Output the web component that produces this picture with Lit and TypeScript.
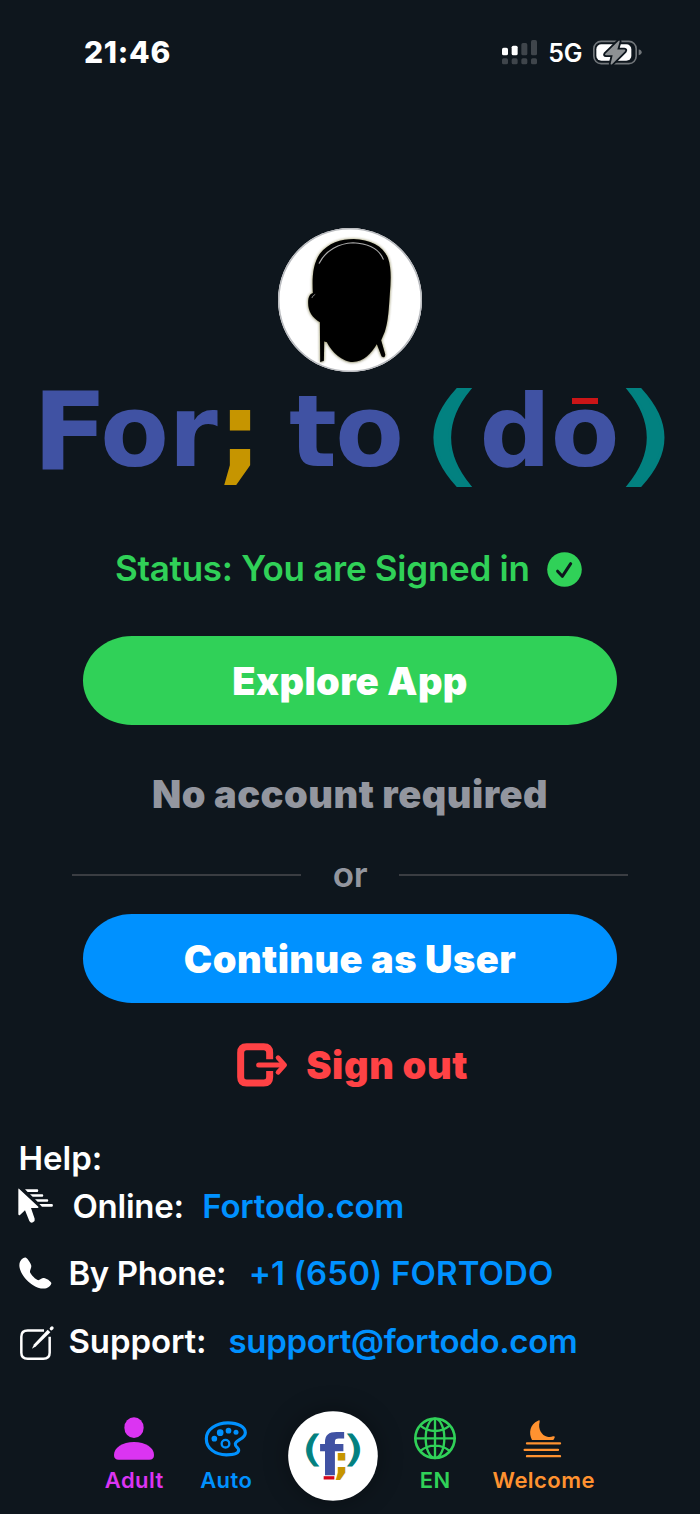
import { LitElement, html, css, type TemplateResult } from "lit";
import { customElement } from "lit/decorators.js";

interface HelpRow {
  kind: string;
  label: string;
  link: string;
  icon: TemplateResult;
}

const signalIcon = html`<svg width="35" height="25" viewBox="36 29 105 75">
  <g fill="#fff">
    <rect x="36" y="52" width="18" height="23" rx="5" />
    <rect x="65" y="46" width="18" height="29" rx="5" />
  </g>
  <g fill="#3f454b">
    <rect x="94" y="38" width="18" height="37" rx="5" />
    <rect x="123" y="29" width="18" height="46" rx="5" />
    <rect x="36" y="84" width="18" height="18" rx="5" />
    <rect x="65" y="84" width="18" height="18" rx="5" />
    <rect x="94" y="84" width="18" height="18" rx="5" />
    <rect x="123" y="84" width="18" height="18" rx="5" />
  </g>
</svg>`;

const batteryIcon = html`<svg width="49" height="25" viewBox="309 28.5 147 75">
  <rect x="311.5" y="32.5" width="127" height="67" rx="22" fill="none" stroke="#71767a" stroke-width="5" />
  <path d="M446 57C452 58 455 61 455 65.500C455 70 452 73 446 74Z" fill="#71767a" />
  <rect x="319" y="41" width="105" height="50" rx="15" fill="#fff" />
  <path
    d="M386 31L346 70Q343 74 348 74H368L362 99Q361 104 366 101L405 62Q408 57 403 57H382L389 33Q389 29 386 31Z"
    fill="#8d9194" stroke="#0e161d" stroke-width="11" stroke-linejoin="round" paint-order="stroke" />
</svg>`;

const avatarArt = html`<svg class="portrait" viewBox="57 41 428 428">
  <g class="halo">
    <path
      d="M161 235C159 190 160 150 182 118C207 86 245 74 283 74C330 76 370 93 385 130C396 160 394 200 391 235C388 280 386 320 376 350L365 376L377 418Q378 427 371 427L366 424L352 388C336 415 312 441 280 441C250 441 216 410 203 382L195 380L194 437L183 441L182 322C160 310 147 290 147 265C147 245 153 238 161 235Z" />
  </g>
  <path d="M180 146C200 106 240 87 281 85C320 87 358 101 371 134" fill="none" stroke="#aaa" stroke-width="3.500" stroke-linecap="round" />
  <path d="M158 250Q161 242 168 239" fill="none" stroke="#999" stroke-width="2.500" />
</svg>`;

const wordmark = html`<svg class="wordmark" viewBox="0 380 700 115" role="img" aria-label="For; to (dō)">
  <g fill="#4052a3" font-size="100">
    <text transform="translate(32.500 469.500) scale(1.020 1)" font-size="108">F</text>
    <text x="100.200" y="466">o</text>
    <text x="168.500" y="466">r</text>
    <text x="289" y="466">t</text>
    <text x="335.300" y="466">o</text>
    <text x="479.500" y="466">d</text>
    <text x="550.700" y="466">o</text>
  </g>
  <text transform="translate(217 470) scale(1.150 1.090)" font-size="100" fill="#c69500">;</text>
  <g fill="#028180" stroke="#028180" stroke-width="2" font-size="108">
    <text class="thin" transform="translate(421.500 472) scale(1.440 1)">(</text>
    <text class="thin" transform="translate(615.800 472) scale(1.440 1)">)</text>
  </g>
  <rect x="572" y="398" width="26" height="6" fill="#cb1517" />
</svg>`;

const checkBadge = html`<svg width="35" height="35" viewBox="0 0 35 35">
  <circle cx="17.500" cy="17.500" r="17.300" fill="#30d158" />
  <path d="M10.600 19.200L15.300 24.300L23.700 11.700" fill="none" stroke="#0e161d" stroke-width="3" stroke-linecap="round" stroke-linejoin="round" />
</svg>`;

const signOutIcon = html`<svg width="50" height="44" viewBox="50 38 150 132" fill="none" stroke="#ff4245">
  <path d="M148 87V67Q148 49 130 49H79Q61 49 61 67V140Q61 158 79 158H130Q148 158 148 140V122" stroke-width="21" />
  <path d="M115 104H188" stroke-width="15" stroke-linecap="round" />
  <path d="M173 82L193 104L173 126" stroke-width="14" stroke-linecap="round" stroke-linejoin="round" />
</svg>`;

const cursorIcon = html`<svg width="35" height="36" viewBox="54 176 105 108">
  <path
    d="M57 178L115 232Q117 236 112 236H93L104 268Q106 275 99 279Q92 282 88 275L75 243L60 257Q56 259 55 255V180Q55 177 57 178Z" fill="#fff" />
  <path d="M75 180H113Q117 184 113 188H83ZM90 194.500H128Q132 198.500 128 202.500H98ZM105 209.500H143Q147 213.500 143 217.500H113ZM118 224H157Q161 228 157 232H126Z" fill="#fff" />
</svg>`;

const phoneIcon = html`<svg width="33" height="33" viewBox="58 381 99 99">
  <path
    d="M70 385C61 391 57 401 60 414C65 434 80 452 98 464C112 473 127 478 140 475C149 472 156 464 155 459C153 453 140 445 133 444C127 443 121 449 116 451C107 448 96 437 91 427C90 421 95 415 95 408C95 402 84 385 79 383C76 382 73 383 70 385Z" fill="#fff" />
</svg>`;

const composeIcon = html`<svg width="35" height="35" viewBox="60 587 105 105" fill="none" stroke="#fff">
  <path d="M132 600.500H83Q64 600.500 64 619V667Q64 685 83 685H130Q149 685 149 667V619" stroke-width="7.500" />
  <path d="M143 598L151 606L108 648L96 655L102 642Z" fill="#fff" stroke="none" />
  <path d="M154 595L156 593" stroke-width="10" stroke-linecap="round" />
</svg>`;

const personIcon = html`<svg width="42" height="44" viewBox="71 50 126 132" fill="#db34f2">
  <ellipse cx="134" cy="82" rx="29" ry="31" />
  <path d="M74 164C74 142 99 125 134 125C169 125 194 142 194 164C194 174 189 178 180 178H88C79 178 74 174 74 164Z" />
</svg>`;

const paletteIcon = html`<svg width="44" height="44" viewBox="345 50 132 132" fill="#0091ff">
  <path
    d="M417 67.500C382 67.500 352 87 352 115C352 144 378 163.500 412 163.500C433 163.500 449 159 449 149C449 142 438 140 439 131C440 118 469 117 469 97C469 80 448 67.500 417 67.500Z"
    fill="none" stroke="#0091ff" stroke-width="9.500" />
  <circle cx="376" cy="115" r="8.500" />
  <circle cx="393.500" cy="97" r="10" />
  <circle cx="418.500" cy="91" r="8.500" />
  <circle cx="441" cy="96" r="7.500" />
  <circle cx="409.500" cy="130" r="11.500" fill="none" stroke="#0091ff" stroke-width="7" />
</svg>`;

const badgeLogo = html`<svg class="badge" viewBox="25 17 270 270" role="img" aria-label="(f;)">
  <circle cx="160" cy="152" r="134.500" fill="#fff" />
  <g fill="#028180" stroke="#028180" stroke-width="2.500" font-size="107">
    <text class="thin" transform="translate(68 165.500) scale(1.440 1)">(</text>
    <text class="thin" transform="translate(192.500 165.500) scale(1.440 1)">)</text>
  </g>
  <text x="118" y="210" font-size="170" fill="#4052a3">f</text>
  <text transform="translate(161 206.500) scale(1.160 1.070)" font-size="108" fill="#c69500" stroke="#fff" stroke-width="6" paint-order="stroke">;</text>
  <rect x="132" y="212.500" width="32" height="10" fill="#d5051b" />
</svg>`;

const globeIcon = html`<svg width="42" height="44" viewBox="102 50 126 132" fill="none" stroke="#30d158" stroke-width="7">
  <circle cx="165" cy="114" r="59" stroke-width="8" />
  <ellipse cx="165" cy="114" rx="28" ry="59" />
  <path d="M165 55V173M106 114H224M121 76Q140 92 165 92T209 76M121 152Q140 136 165 136T209 152" />
</svg>`;

const moonIcon = html`<svg width="39" height="44" viewBox="429 50 117 132" fill="#ff9230">
  <path d="M474 61Q480 58 479 64C473 86 485 105 502 109Q511 111 519 108Q526 107 524 112L520 119H456C445 97 450 72 474 61Z" />
  <path d="M441 129H540M434 148.500H534M441 167.500H540" stroke="#ff9230" stroke-width="7" stroke-linecap="round" />
</svg>`;

@customElement("app-root")
export class AppRoot extends LitElement {
  static styles = css`
    :host {
      display: block;
      font-family: Inter, "Liberation Sans", sans-serif;
      color: #fff;
    }
    svg {
      display: block;
      flex: none;
      overflow: visible;
    }
    svg text {
      font-family: "DejaVu Sans", sans-serif;
      font-weight: 700;
    }
    svg .thin {
      font-weight: 400;
    }
    .screen {
      display: flex;
      flex-direction: column;
      box-sizing: border-box;
      width: 700px;
      height: 1514px;
      overflow: hidden;
      background: #0e161d;
      white-space: nowrap;
    }
    .statusbar {
      display: flex;
      align-items: center;
      justify-content: space-between;
      height: 104px;
      padding: 0 58px 0 84px;
    }
    .clock {
      font-size: 30px;
      font-weight: 800;
      letter-spacing: 0.7px;
    }
    .indicators {
      display: flex;
      align-items: center;
      gap: 11px;
    }
    .network {
      font-size: 25px;
      font-weight: 600;
      letter-spacing: -0.4px;
      padding-top: 2px;
    }
    .avatar {
      align-self: center;
      width: 143.4px;
      height: 143.4px;
      margin-top: 124.3px;
      border-radius: 50%;
      overflow: hidden;
      background: #fff;
      box-shadow: inset 0 0 0 1.5px #b9bbbf;
    }
    .portrait {
      width: 100%;
      height: 100%;
    }
    .halo {
      filter: drop-shadow(0 0 5px #d8d49a) drop-shadow(0 1px 1px #777);
    }
    .wordmark {
      width: 700px;
      height: 115px;
      margin-top: 8.3px;
    }
    .status {
      display: flex;
      align-items: center;
      gap: 17.5px;
      height: 44px;
      margin-top: 51px;
      padding-left: 115px;
      font-size: 35px;
      font-weight: 600;
      letter-spacing: -0.27px;
      color: #30d158;
    }
    .status svg {
      margin-top: 3px;
    }
    .pill {
      align-self: center;
      display: block;
      width: 534px;
      height: 89px;
      padding: 2px 0 0;
      border: 0;
      border-radius: 49px / 44.5px;
      font: inherit;
      font-size: 38px;
      font-weight: 900;
      color: #fff;
    }
    .explore {
      margin-top: 46px;
      background: #30d158;
      letter-spacing: 0.4px;
    }
    .continue {
      margin-top: 17.7px;
      background: #0091ff;
      letter-spacing: 0.45px;
    }
    .note {
      margin-top: 47.5px;
      line-height: 45px;
      height: 44px;
      text-align: center;
      font-size: 38px;
      font-weight: 900;
      letter-spacing: 0.5px;
      color: #93969f;
    }
    .divider {
      display: flex;
      align-items: center;
      justify-content: space-between;
      height: 44px;
      margin-top: 35.8px;
      padding: 0 71.5px;
      font-size: 35px;
      font-weight: 600;
      letter-spacing: -0.3px;
      color: #93969f;
    }
    .rule {
      width: 229.5px;
      height: 2px;
      margin-top: 1px;
      background: #3a3d42;
    }
    .signout {
      display: flex;
      align-items: center;
      gap: 19.5px;
      height: 44px;
      margin-top: 39.8px;
      padding-left: 236.7px;
      font-size: 38px;
      font-weight: 900;
      letter-spacing: 0.6px;
      color: #ff4245;
    }
    .help {
      margin-top: 49.5px;
      padding-left: 18px;
      font-size: 33px;
      font-weight: 560;
      line-height: 44px;
    }
    .heading {
      padding-left: 0.5px;
      line-height: 45px;
      height: 44px;
    }
    .rows {
      display: flex;
      flex-direction: column;
      gap: 23.6px;
      margin-top: 3.4px;
    }
    .row {
      display: flex;
      align-items: center;
      height: 44px;
    }
    .glyph {
      display: flex;
      width: 49.2px;
      padding-left: 1.3px;
    }
    .link {
      color: #0091ff;
      text-decoration: none;
    }
    .online .glyph {
      width: 54.5px;
      padding-left: 0;
    }
    .online .label {
      letter-spacing: -0.25px;
    }
    .online .link {
      margin-left: 18.5px;
      letter-spacing: -0.2px;
    }
    .phone .label {
      letter-spacing: -0.4px;
    }
    .phone .link {
      margin-left: 22.5px;
      letter-spacing: 0.14px;
    }
    .support .glyph {
      width: 48.5px;
      padding-left: 2px;
      padding-top: 5px;
    }
    .support .label {
      letter-spacing: -0.1px;
    }
    .support .link {
      margin-left: 22px;
      letter-spacing: -0.35px;
    }
    .tabs {
      display: flex;
      justify-content: center;
      gap: 36px;
      height: 103.5px;
      margin-top: auto;
      padding-right: 0.5px;
    }
    .tab {
      display: flex;
      flex-direction: column;
      align-items: center;
      gap: 6px;
      padding-top: 6px;
      font-size: 22px;
      font-weight: 560;
      line-height: 27px;
      letter-spacing: 0.45px;
    }
    .adult {
      width: 60px;
      color: #db34f2;
    }
    .auto {
      width: 52px;
      color: #0091ff;
    }
    .lang {
      width: 42px;
      color: #30d158;
    }
    .welcome {
      width: 103px;
      color: #ff9230;
    }
    .welcome svg {
      margin-right: 2px;
    }
    .badge {
      width: 90px;
      height: 90px;
      border-radius: 50%;
      box-shadow: 0 0 24px rgba(0, 0, 0, 0.35);
    }
  `;

  private helpRows: HelpRow[] = [
    { kind: "online", label: "Online:", link: "Fortodo.com", icon: cursorIcon },
    { kind: "phone", label: "By Phone:", link: "+1 (650) FORTODO", icon: phoneIcon },
    { kind: "support", label: "Support:", link: "support@fortodo.com", icon: composeIcon },
  ];

  private tab(kind: string, label: string, icon: TemplateResult) {
    return html`<div class="tab ${kind}">${icon}<span>${label}</span></div>`;
  }

  render() {
    return html`
      <div class="screen">
        <header class="statusbar">
          <span class="clock">21:46</span>
          <div class="indicators">${signalIcon}<span class="network">5G</span>${batteryIcon}</div>
        </header>
        <div class="avatar">${avatarArt}</div>
        ${wordmark}
        <div class="status"><span>Status: You are Signed in</span>${checkBadge}</div>
        <button class="pill explore">Explore App</button>
        <div class="note">No account required</div>
        <div class="divider"><span class="rule"></span><span>or</span><span class="rule"></span></div>
        <button class="pill continue">Continue as User</button>
        <div class="signout">${signOutIcon}<span>Sign out</span></div>
        <section class="help">
          <div class="heading">Help:</div>
          <div class="rows">
            ${this.helpRows.map(
              (r) => html`<div class="row ${r.kind}">
                <span class="glyph">${r.icon}</span><span class="label">${r.label}</span><a class="link">${r.link}</a>
              </div>`
            )}
          </div>
        </section>
        <nav class="tabs">
          ${this.tab("adult", "Adult", personIcon)} ${this.tab("auto", "Auto", paletteIcon)} ${badgeLogo}
          ${this.tab("lang", "EN", globeIcon)} ${this.tab("welcome", "Welcome", moonIcon)}
        </nav>
      </div>
    `;
  }
}
